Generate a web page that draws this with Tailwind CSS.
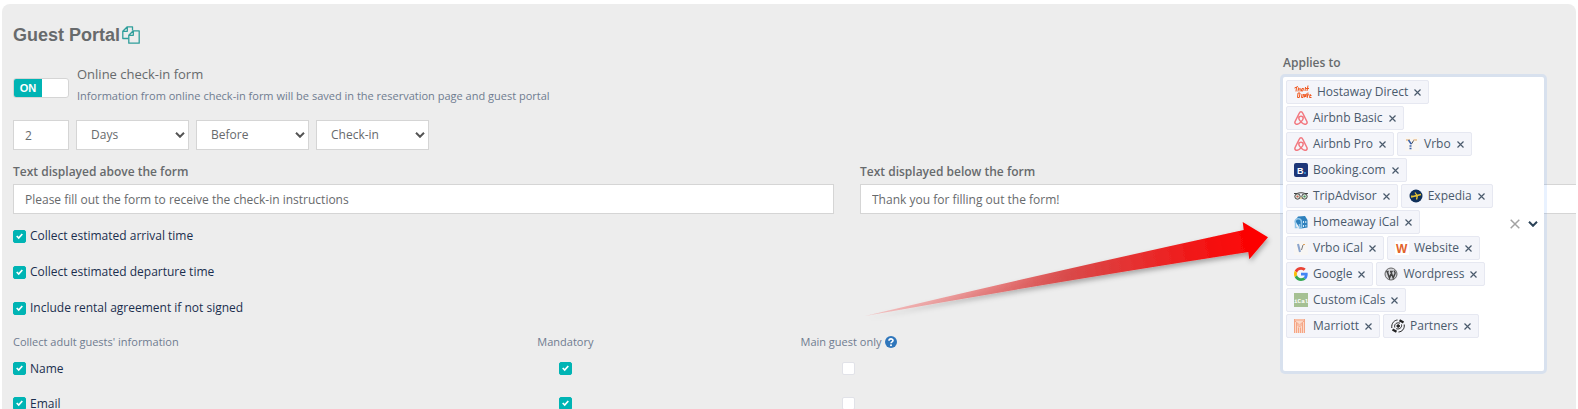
<!DOCTYPE html>
<html lang="en">
<head>
  <meta charset="UTF-8" />
  <meta name="viewport" content="width=device-width, initial-scale=1.0" />
  <title>Guest Portal</title>
  <script src="https://cdn.jsdelivr.net/npm/@tailwindcss/browser@4"></script>
</head>
<body class="h-screen overflow-hidden bg-white font-['Open_Sans',sans-serif] text-[12px] text-[#676a6c]">

  <main class="relative mx-[2px] mt-1 min-h-screen overflow-hidden rounded-lg bg-[#ededed] px-[11px] pt-5">

    <!-- Title -->
    <div class="flex h-[22px] items-center gap-[2px]">
      <h1 class="font-['Liberation_Sans',sans-serif] text-[18px] font-bold leading-[22px]">Guest Portal</h1>
      <button type="button" aria-label="Copy">
        <svg class="h-[18px] w-[18px]" viewBox="0 0 18 18" fill="none" stroke="#2f9e9b" stroke-width="1.3" stroke-linejoin="round">
          <path d="M6.500 12.500H.8V5.300L5.300.8h5.200v3.600M5.300.8v4.500H.8" />
          <path d="M11.300 4.800h5.900v12.400H6.800V9.300zM11.300 4.800v4.500H6.800" />
        </svg>
      </button>
    </div>

    <!-- Online check-in switch -->
    <div class="mt-[19px] flex gap-2">
      <button type="button" role="switch" aria-checked="true" aria-labelledby="checkinLabel" class="mt-[13px] flex h-5 w-14 overflow-hidden rounded-[3px] border border-[#d5d5d5] bg-white">
        <span class="flex h-full w-7 items-center justify-center bg-[#00b4b4] font-['Liberation_Sans',sans-serif] text-[11px] font-bold text-white">ON</span>
      </button>
      <div>
        <p id="checkinLabel" class="text-[13px] leading-[18px]">Online check-in form</p>
        <p class="mt-1 text-[11px] leading-[18px] text-[#6f7c90]">Information from online check-in form will be saved in the reservation page and guest portal</p>
      </div>
    </div>

    <!-- Timing -->
    <div class="mt-[15px] flex gap-[7px]">
      <input type="number" value="2" aria-label="Amount" class="h-[30px] w-14 appearance-none border border-[#d5d5d5] bg-white px-[11px] [&::-webkit-inner-spin-button]:appearance-none" />
      <div class="grid w-[113px] items-center">
        <select aria-label="Unit" class="col-start-1 row-start-1 h-[30px] w-full appearance-none border border-[#d5d5d5] bg-white px-[14px]"><option>Days</option><option>Hours</option></select>
        <svg class="pointer-events-none col-start-1 row-start-1 mr-1 h-[6px] w-[10px] justify-self-end" viewBox="0 0 10 6" fill="none" stroke="#555" stroke-width="2"><path d="M1 .8l4 4 4-4" /></svg>
      </div>
      <div class="grid w-[113px] items-center">
        <select aria-label="Before or after" class="col-start-1 row-start-1 h-[30px] w-full appearance-none border border-[#d5d5d5] bg-white px-[14px]"><option>Before</option><option>After</option></select>
        <svg class="pointer-events-none col-start-1 row-start-1 mr-1 h-[6px] w-[10px] justify-self-end" viewBox="0 0 10 6" fill="none" stroke="#555" stroke-width="2"><path d="M1 .8l4 4 4-4" /></svg>
      </div>
      <div class="grid w-[113px] items-center">
        <select aria-label="Event" class="col-start-1 row-start-1 h-[30px] w-full appearance-none border border-[#d5d5d5] bg-white px-[14px]"><option>Check-in</option><option>Check-out</option></select>
        <svg class="pointer-events-none col-start-1 row-start-1 mr-1 h-[6px] w-[10px] justify-self-end" viewBox="0 0 10 6" fill="none" stroke="#555" stroke-width="2"><path d="M1 .8l4 4 4-4" /></svg>
      </div>
    </div>

    <!-- Texts around the form -->
    <div class="mt-[14px] flex gap-[26px]">
      <div class="w-[52.9%] shrink-0">
        <label for="textAbove" class="block font-semibold leading-4">Text displayed above the form</label>
        <input type="text" id="textAbove" value="Please fill out the form to receive the check-in instructions" class="mt-1 h-[30px] w-full border border-[#d5d5d5] bg-white px-[11px]" />
      </div>
      <div class="w-[52.9%] shrink-0">
        <label for="textBelow" class="block font-semibold leading-4">Text displayed below the form</label>
        <input type="text" id="textBelow" value="Thank you for filling out the form!" class="mt-1 h-[30px] w-full border border-[#d5d5d5] bg-white px-[11px]" />
      </div>
    </div>

    <!-- Options -->
    <div id="options" class="mt-[13px] space-y-[18px] text-[#1b2f4f]"></div>

    <!-- Adult guests -->
    <table class="mt-4 w-[63%] table-fixed">
      <thead class="text-[11px] leading-[18px] text-[#6f7c90]">
        <tr class="h-[18px]">
          <th class="w-[42%] text-left font-normal">Collect adult guests' information</th>
          <th class="w-[29%] font-normal">Mandatory</th>
          <th class="w-[29%] font-normal">
            <span class="inline-flex items-center gap-1">Main guest only
              <svg class="h-3 w-3" viewBox="0 0 12 12"><circle cx="6" cy="6" r="6" fill="#2f76bb" /><path d="M4 4.700C4 2.300 8 2.300 8 4.600 8 6 6 5.800 6 7.300" fill="none" stroke="#fff" stroke-width="1.600" /><circle cx="6" cy="9.200" r="1" fill="#fff" /></svg>
            </span>
          </th>
        </tr>
      </thead>
      <tbody id="guestFields" class="text-[#1b2f4f]"></tbody>
    </table>

    <!-- Channel picker -->
    <div class="absolute right-8 top-[51px] w-[261px]">
      <label for="channelSearch" class="block font-semibold leading-4">Applies to</label>
      <div class="mt-[6px] flex min-h-[294px] items-center rounded-[2px] bg-white pl-[3px] pr-[6px] shadow-[0_0_0_3px_rgba(38,132,255,0.1)]">
        <div class="flex w-[213px] flex-wrap content-start gap-x-[3px] gap-y-[2px] self-stretch pt-[3px]">
          <div id="channels" class="contents"></div>
          <input id="channelSearch" type="text" class="h-6 w-full bg-transparent outline-none" />
        </div>
        <div class="ml-auto flex items-center gap-2">
          <button type="button" aria-label="Clear all"><svg class="h-[10px] w-[10px]" viewBox="0 0 10 10" stroke="#a3a3a3" stroke-width="1.500"><path d="M.7.7l8.600 8.600M9.300.7L.7 9.300" /></svg></button>
          <button type="button" aria-label="Open list"><svg class="h-[6px] w-[10px]" viewBox="0 0 10 6" fill="none" stroke="#2c4358" stroke-width="2"><path d="M1 .8l4 4 4-4" /></svg></button>
        </div>
      </div>
    </div>

    <!-- Arrow to the channel picker -->
    <svg class="pointer-events-none absolute right-[296px] top-[206px] h-[120px] w-[420px]" viewBox="860 210 420 120">
      <defs>
        <linearGradient id="arrowFill" gradientUnits="userSpaceOnUse" x1="867" y1="316" x2="1268" y2="237">
          <stop offset="0" stop-color="#f33" stop-opacity=".2" />
          <stop offset=".15" stop-color="#e66" stop-opacity=".5" />
          <stop offset=".5" stop-color="#d94444" stop-opacity=".95" />
          <stop offset=".9" stop-color="#f80a0a" />
          <stop offset="1" stop-color="#f00" />
        </linearGradient>
        <filter id="arrowShadow" x="-5%" y="-10%" width="110%" height="130%"><feDropShadow dx="1" dy="3" stdDeviation="2.5" flood-opacity=".3" /></filter>
      </defs>
      <path filter="url(#arrowShadow)" fill="url(#arrowFill)" d="M865 316Q1055 271 1243.700 230L1242.700 222L1268 237.300L1249.300 259.300L1248.300 252Q1060 281 865 316z" />
    </svg>
  </main>

  <script>
    const icons = {
      hostaway: '<svg class="h-[14px] w-[18px]" viewBox="0 0 18 14" fill="none" stroke="#f0561d" stroke-width="1"><path d="M.5 3l3.500-1.500M2.500 2L2 6.500M4.500 2.500l-.5 4M4.300 4.500l2-1-.3 3M8 3.500l-.7 2.500h1.500l.7-2.500zM11.500 2L11 6M14 .5L13 6M11.500 3.500h3.500M4 8l-.5 4.500h1.800L6 8zM8 9l-.5 3.500H9L9.500 9M10.300 12.500L11 9l.8 3L12.500 8.500M14 7.500l-.8 5.500M13.500 10.500l1.500-1M16.300 9l-.8 3.500h2M15.800 10.500h1.700" /></svg>',
      airbnb: '<svg class="h-[14px] w-[14px]" viewBox="0 0 14 14" fill="none" stroke="#f2777f" stroke-width="1.500"><path d="M7 .8c1 0 1.400.7 1.900 1.700l4 8c.7 1.500-.3 2.800-1.700 2.800-1.900 0-6.400-3.600-6.400-6 0-1.300 1-2.100 2.200-2.100s2.200.8 2.200 2.100c0 2.400-4.500 6-6.400 6-1.400 0-2.400-1.300-1.700-2.800l4-8C5.600 1.500 6 .8 7 .8z" /></svg>',
      vrbo: '<svg class="h-[14px] w-[14px]" viewBox="0 0 14 14"><path fill="#f8f6f4" d="M0 0h14v14H0z" /><path d="M1 3h4M8.500 3H12" stroke="#e0a35f" /><path d="M3.500 3l2 3M5 6.500h2M4.500 9h2M4.500 11.500h2" stroke="#3e63a8" stroke-width="1.500" /><path d="M8.500 3.500L7 6.500" stroke="#555" /></svg>',
      booking: '<svg class="h-[14px] w-[14px]" viewBox="0 0 14 14"><rect width="14" height="14" rx="2" fill="#1d3678" /><text x="3" y="10.500" font-family="Liberation Sans" font-size="9" font-weight="700" fill="#fff">B</text><circle cx="11" cy="10" r=".9" fill="#39a9e8" /></svg>',
      tripadvisor: '<svg class="h-[14px] w-[14px]" viewBox="0 0 14 14" fill="none"><path d="M0 4.500h3c2-1 6-1 8 0h3" stroke="#444" /><circle cx="3.500" cy="7.500" r="2.700" fill="#dfe8dc" stroke="#444" /><circle cx="10.500" cy="7.500" r="2.700" fill="#dfe8dc" stroke="#444" /><circle cx="3.500" cy="7.500" r="1.100" fill="#c95b4e" /><circle cx="10.500" cy="7.500" r="1.100" fill="#3d8f59" /><path d="M6 8.500h2L7 10.500z" fill="#dbb24c" /></svg>',
      expedia: '<svg class="h-[14px] w-[14px]" viewBox="0 0 14 14"><circle cx="7" cy="7" r="6.500" fill="#10305a" /><path d="M2 8L12 5.500M8 6.500L6 3.500M8.500 6.500L7.500 10.500M2.500 6.500l1 1.500" stroke="#e8c534" stroke-width="1.300" /></svg>',
      homeaway: '<svg class="h-[14px] w-[14px]" viewBox="0 0 14 14" fill="none"><path d="M1 6l3-4.500L11 1l2.500 4v7.500L9 13.300H6" fill="#2e80bd" /><path d="M1 7.500C1 2.500 7.500 2.500 7.500 7.500V13H5.500V9M1.500 7v5.500h2" stroke="#8fc4e8" stroke-width="1.500" /><path d="M9.500 6v2M11.800 6v2M9.500 10v2M11.800 10v1.500" stroke="#d8ecf8" /></svg>',
      vrboIcal: '<svg class="h-[14px] w-[14px]" viewBox="0 0 14 14"><path fill="#f8f6f4" d="M0 0h14v14H0z" /><path d="M4 3l2 8" stroke="#8ba4cd" stroke-width="2" /><path d="M7.500 9L9 4" stroke="#777" /><path d="M9 3.500h2" stroke="#e0a35f" /></svg>',
      website: '<svg class="h-[14px] w-[14px]" viewBox="0 0 14 14"><path fill="#fff" d="M0 0h14v14H0z" /><text x="1" y="12" font-family="Liberation Sans" font-size="12" font-weight="700" fill="#e2622a">W</text></svg>',
      google: '<svg class="h-[14px] w-[14px]" viewBox="0 0 48 48"><path fill="#EA4335" d="M24 9.500c3.540 0 6.710 1.220 9.210 3.600l6.850-6.850C35.900 2.380 30.470 0 24 0 14.620 0 6.510 5.380 2.560 13.220l7.980 6.190C12.430 13.720 17.740 9.500 24 9.500z"/><path fill="#4285F4" d="M46.980 24.550c0-1.570-.15-3.090-.38-4.550H24v9.020h12.940c-.58 2.960-2.260 5.480-4.780 7.180l7.730 6c4.510-4.180 7.090-10.360 7.090-17.650z"/><path fill="#FBBC05" d="M10.530 28.590c-.48-1.450-.76-2.990-.76-4.590s.27-3.140.76-4.590l-7.980-6.190C.92 16.460 0 20.120 0 24s.92 7.540 2.560 10.780z"/><path fill="#34A853" d="M24 48c6.480 0 11.930-2.130 15.890-5.810l-7.730-6c-2.150 1.450-4.920 2.300-8.160 2.300-6.260 0-11.570-4.220-13.470-9.910l-7.980 6.190C6.510 42.620 14.620 48 24 48z"/></svg>',
      wordpress: '<svg class="h-[14px] w-[14px]" viewBox="0 0 14 14" fill="none"><circle cx="7" cy="7" r="6" fill="#d4d5d9" stroke="#666" /><path d="M2.200 4.500h2.500M6 4.500h2.800M3.200 4.500L5.500 11 7 7M6.800 4.500L9.200 11 11 6.500c.5-1.500-.8-1.800-.8-3" stroke="#444" stroke-width="1.500" /></svg>',
      ical: '<svg class="h-[14px] w-[14px]" viewBox="0 0 14 14"><path fill="#a5c093" d="M0 0h14v14H0z" /><text x="0" y="10" font-family="Liberation Mono" font-size="6" font-weight="700" fill="#fff">iCal</text></svg>',
      marriott: '<svg class="h-[14px] w-[14px]" viewBox="0 0 14 14" fill="none" stroke="#f5a585"><path fill="#fbd9c9" stroke="none" d="M0 0h11v14H0z" /><path d="M.5 0v14M2.500 4v10M8.500 4v10M10.500 0v14M0 1h11M1 2l4.500 4L10 2M2.500 5l3 3 3-3M4.500 8.500V14M6.500 8.500V14" /></svg>',
      partners: '<svg class="h-[14px] w-[14px]" viewBox="0 0 14 14" fill="none" stroke="#222"><circle cx="7.200" cy="7" r="1.300" fill="#222" /><path d="M3.800 8.500C2.800 5 6 3 9 4.200M10.500 5.500c.8 3.300-2.500 5.200-5.300 4.200" /><path d="M.8 9C.2 4 3.500 1.200 6.500 1M13.200 5.500c.6 4.500-2.200 7.200-5.700 7.500" /><path d="M8.500 1.300l4 2.200M1.500 10.500L5.500 12.700" stroke-width="2.300" /></svg>'
    };

    const channels = [
      ['Hostaway Direct', 'hostaway'],
      ['Airbnb Basic', 'airbnb'],
      ['Airbnb Pro', 'airbnb'],
      ['Vrbo', 'vrbo'],
      ['Booking.com', 'booking'],
      ['TripAdvisor', 'tripadvisor'],
      ['Expedia', 'expedia'],
      ['Homeaway iCal', 'homeaway'],
      ['Vrbo iCal', 'vrboIcal'],
      ['Website', 'website'],
      ['Google', 'google'],
      ['Wordpress', 'wordpress'],
      ['Custom iCals', 'ical'],
      ['Marriott', 'marriott'],
      ['Partners', 'partners']
    ];

    document.getElementById('channels').innerHTML = channels.map(([name, icon]) => `
      <div class="flex h-6 items-center gap-[5px] rounded-[2px] border border-[#e6e8f1] bg-[#f4f5fa] px-[7px] text-[#4a5a6c]">
        ${icons[icon]}
        <span class="leading-[18px]">${name}</span>
        <button type="button" aria-label="Remove ${name}" class="pl-[1px]"><svg class="h-[7px] w-[7px]" viewBox="0 0 7 7" stroke="#4a5a6c" stroke-width="1.200"><path d="M.5.5l6 6M6.500.5l-6 6" /></svg></button>
      </div>
    `).join('');

    // Teal check box with a white tick, drawn over the real input
    function tickBox(checked, attrs) {
      return `
        <span class="inline-grid place-items-center">
          <input type="checkbox" ${checked ? 'checked' : ''} ${attrs} class="peer col-start-1 row-start-1 h-[13px] w-[13px] appearance-none rounded-[2px] border border-[#e1e2e8] bg-white checked:border-[#00b4b4] checked:bg-[#00b4b4]" />
          <svg class="pointer-events-none invisible col-start-1 row-start-1 h-[7px] w-[7px] peer-checked:visible" viewBox="0 0 7 7" fill="none" stroke="#fff" stroke-width="1.700"><path d="M.7 3l2 2L6.300 1" /></svg>
        </span>`;
    }

    const options = ['Collect estimated arrival time', 'Collect estimated departure time', 'Include rental agreement if not signed'];
    document.getElementById('options').innerHTML = options.map((text, i) => `
      <div class="flex h-[18px] items-center gap-1">
        ${tickBox(true, `id="option${i}"`)}
        <label for="option${i}" class="leading-[18px]">${text}</label>
      </div>
    `).join('');

    document.getElementById('guestFields').innerHTML = ['Name', 'Email'].map(field => `
      <tr class="h-[35px]">
        <td>
          <div class="flex items-center gap-1">
            ${tickBox(true, `id="field${field}"`)}
            <label for="field${field}" class="leading-[18px]">${field}</label>
          </div>
        </td>
        <td class="text-center"><div class="flex justify-center">${tickBox(true, `aria-label="${field} mandatory"`)}</div></td>
        <td class="text-center"><div class="flex justify-center">${tickBox(false, `aria-label="${field} main guest only"`)}</div></td>
      </tr>
    `).join('');
  </script>
</body>
</html>
